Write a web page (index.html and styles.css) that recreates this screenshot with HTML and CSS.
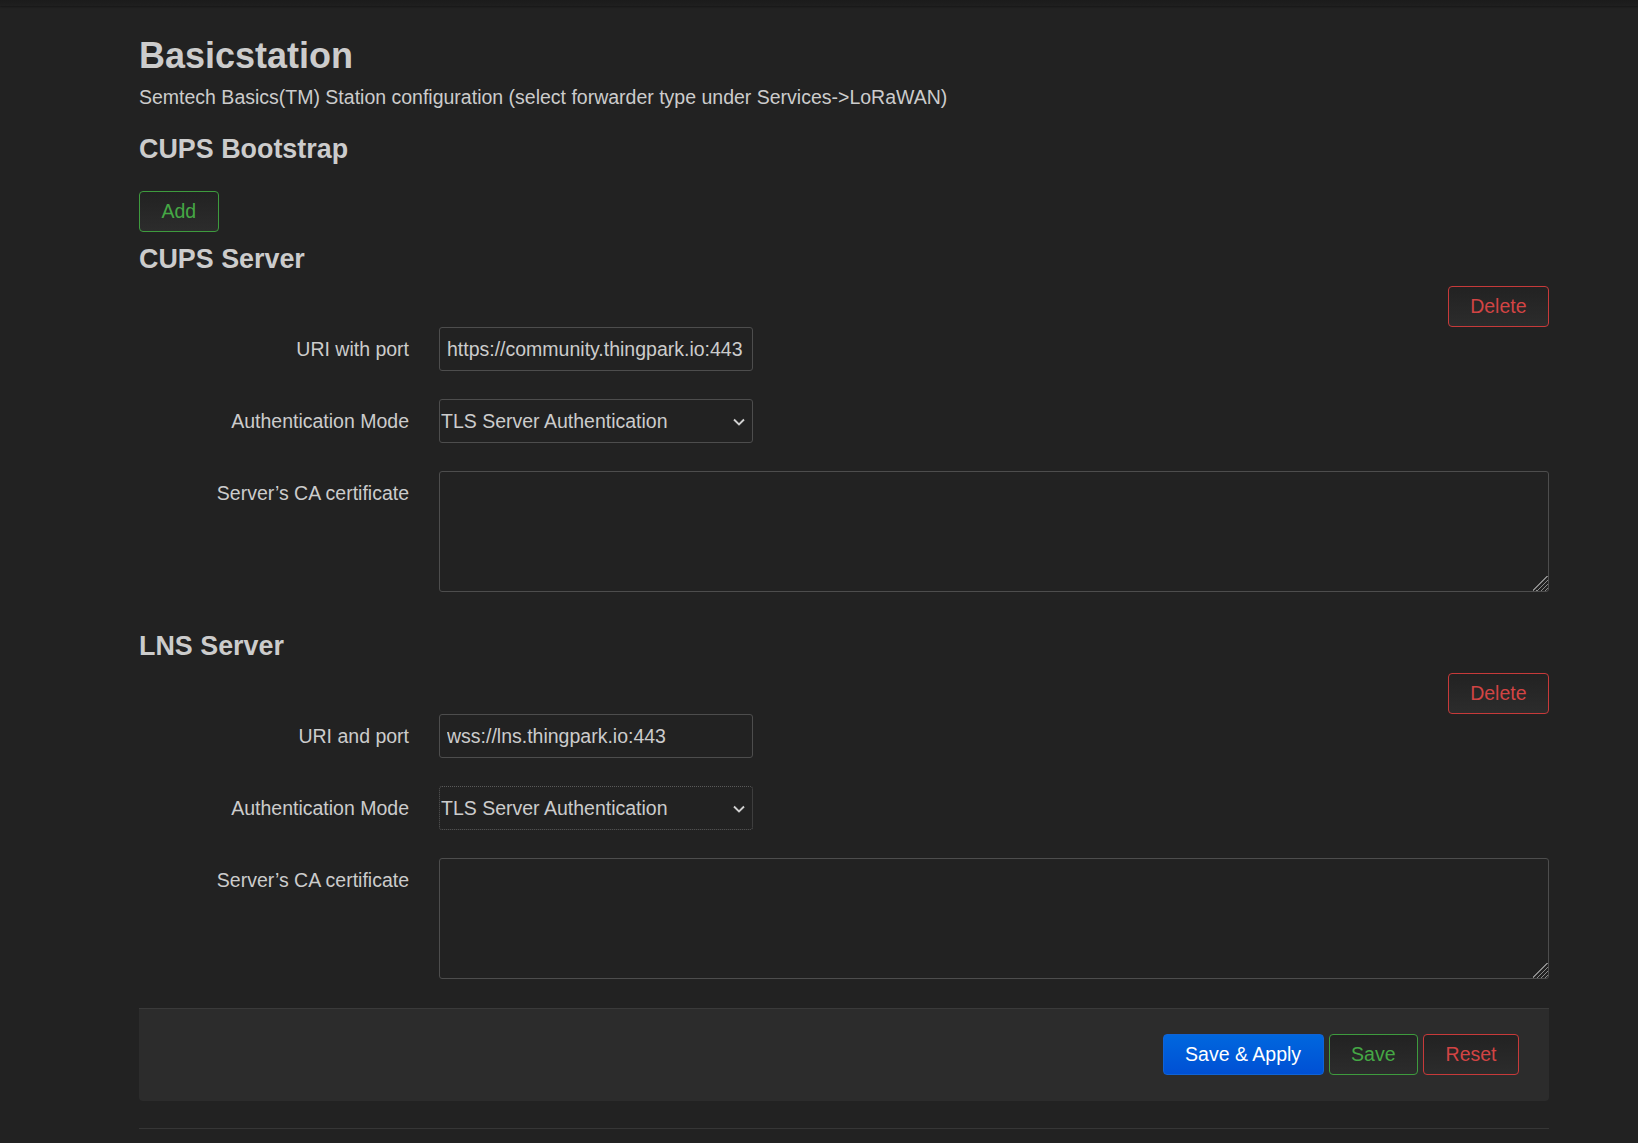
FILE: index.html
```html
<!DOCTYPE html>
<html lang="en">
<head>
<meta charset="utf-8">
<title>Basicstation</title>
<link rel="stylesheet" href="styles.css">
</head>
<body>
<header class="topbar"></header>
<main class="page">
  <h2 class="title">Basicstation</h2>
  <div class="desc">Semtech Basics(TM) Station configuration (select forwarder type under Services-&gt;LoRaWAN)</div>

  <h3 class="section-title boot">CUPS Bootstrap</h3>
  <div class="add-row"><button class="btn btn-add" type="button">Add</button></div>

  <h3 class="section-title cups">CUPS Server</h3>
  <section class="section">
    <div class="del-row"><button class="btn btn-del" type="button">Delete</button></div>
    <div class="field">
      <label class="label">URI with port</label>
      <div class="control"><input class="text" type="text" value="https://community.thingpark.io:443"></div>
    </div>
    <div class="field">
      <label class="label">Authentication Mode</label>
      <div class="control select-wrap">
        <select class="select"><option>TLS Server Authentication</option></select>
        <svg class="chev" width="12" height="8" viewBox="0 0 12 8"><path d="M1 1.5 L6 6.5 L11 1.5" fill="none" stroke="#d0d0d0" stroke-width="1.9"/></svg>
      </div>
    </div>
    <div class="field">
      <label class="label">Server’s CA certificate</label>
      <div class="control wide"><textarea class="area"></textarea></div>
    </div>
  </section>

  <h3 class="section-title lns">LNS Server</h3>
  <section class="section">
    <div class="del-row"><button class="btn btn-del" type="button">Delete</button></div>
    <div class="field">
      <label class="label">URI and port</label>
      <div class="control"><input class="text" type="text" value="wss://lns.thingpark.io:443"></div>
    </div>
    <div class="field">
      <label class="label">Authentication Mode</label>
      <div class="control select-wrap">
        <select class="select focused"><option>TLS Server Authentication</option></select>
        <svg class="chev" width="12" height="8" viewBox="0 0 12 8"><path d="M1 1.5 L6 6.5 L11 1.5" fill="none" stroke="#d0d0d0" stroke-width="1.9"/></svg>
      </div>
    </div>
    <div class="field">
      <label class="label">Server’s CA certificate</label>
      <div class="control wide"><textarea class="area"></textarea></div>
    </div>
  </section>

  <div class="actions">
    <button class="btn btn-apply" type="button">Save &amp; Apply</button>
    <button class="btn btn-save" type="button">Save</button>
    <button class="btn btn-reset" type="button">Reset</button>
  </div>
  <hr class="rule">
</main>
</body>
</html>
```

FILE: styles.css
```css
html, body {
  margin: 0;
  padding: 0;
  background: #222222;
}

body {
  font-family: "Liberation Sans", Arial, sans-serif;
  font-size: 19.5px;
  color: #cccccc;
}

.topbar {
  display: block;
  height: 6px;
  background: linear-gradient(#1b1b1b, #1f1f1f);
  box-shadow: 0 1px 2px rgba(0, 0, 0, 0.35);
}

.page {
  width: 1410px;
  margin-left: 139px;
  padding-top: 30px;
}

.title {
  margin: 0;
  font-size: 36px;
  line-height: 40px;
  font-weight: bold;
  color: #cccccc;
}

.desc {
  margin-top: 7px;
  line-height: 28px;
  color: #cccccc;
}

.section-title {
  margin: 0;
  font-size: 26.88px;
  line-height: 32px;
  font-weight: bold;
  color: #cccccc;
}

.section-title.boot { margin-top: 22px; }
.section-title.cups { margin-top: 11px; }
.section-title.lns { margin-top: 38px; }

.add-row {
  margin-top: 26px;
  display: flex;
}

.btn {
  font-family: "Liberation Sans", Arial, sans-serif;
  font-size: 19.5px;
  height: 41px;
  line-height: 39px;
  padding: 0 21.5px;
  border-radius: 4px;
  border: 1px solid #555;
  background: linear-gradient(#222222, #2c2c2c);
  color: #cccccc;
  box-sizing: border-box;
  cursor: pointer;
  white-space: nowrap;
}

.btn-add, .btn-save {
  border-color: #3e9b3e;
  color: #45a845;
}

.btn-del, .btn-reset {
  border-color: #c73a3a;
  color: #d24444;
}

.btn-apply {
  border-color: #1063d6;
  background: linear-gradient(#0067de, #0050d4);
  color: #ffffff;
}

.del-row {
  margin-top: 11px;
  display: flex;
  justify-content: flex-end;
}

.field {
  display: flex;
  align-items: flex-start;
  gap: 30px;
  margin-top: 28px;
}

.del-row + .field { margin-top: 0; }

.label {
  width: 270px;
  flex: none;
  text-align: right;
  line-height: 44px;
  color: #cccccc;
}

.control {
  width: 314px;
  flex: none;
}

.control.wide {
  width: 1110px;
}

.text {
  display: block;
  width: 100%;
  height: 44px;
  box-sizing: border-box;
  padding: 0 7px;
  margin: 0;
  font-family: "Liberation Sans", Arial, sans-serif;
  font-size: 19.5px;
  color: #cccccc;
  background: #222222;
  border: 1px solid #4d4d4d;
  border-radius: 3px;
  outline: none;
}

.select-wrap {
  position: relative;
}

.select {
  display: block;
  width: 100%;
  height: 44px;
  box-sizing: border-box;
  padding: 0 24px 0 1px;
  margin: 0;
  font-family: "Liberation Sans", Arial, sans-serif;
  font-size: 19.5px;
  color: #cccccc;
  background: #222222;
  border: 1px solid #4d4d4d;
  border-radius: 3px;
  -webkit-appearance: none;
  appearance: none;
  outline: none;
}

.select.focused {
  border-style: dotted;
  border-color: #5a5a5a;
}

.chev {
  position: absolute;
  right: 8px;
  top: 19px;
  pointer-events: none;
}

.area {
  display: block;
  width: 100%;
  height: 121px;
  box-sizing: border-box;
  margin: 0;
  padding: 6px 7px;
  font-family: "Liberation Sans", Arial, sans-serif;
  font-size: 19.5px;
  color: #cccccc;
  background: #222222;
  border: 1px solid #4d4d4d;
  border-radius: 3px;
  resize: vertical;
  outline: none;
}

.area::-webkit-resizer {
  background: linear-gradient(135deg,
    transparent 0 46%,
    #8a8a8a 46% 51%, transparent 51% 60%,
    #8a8a8a 60% 65%, transparent 65% 74%,
    #8a8a8a 74% 79%, transparent 79% 88%,
    #8a8a8a 88% 93%, transparent 93%);
}

.actions {
  margin-top: 29px;
  border-top: 1px solid #3a3a3a;
  background: #2c2c2c;
  border-radius: 0 0 4px 4px;
  height: 93px;
  box-sizing: border-box;
  padding: 25px 30px 0 0;
  display: flex;
  justify-content: flex-end;
  align-items: flex-start;
  gap: 5px;
}

.rule {
  margin: 27px 0 0 0;
  border: 0;
  border-top: 1px solid #363636;
  height: 0;
}
```
